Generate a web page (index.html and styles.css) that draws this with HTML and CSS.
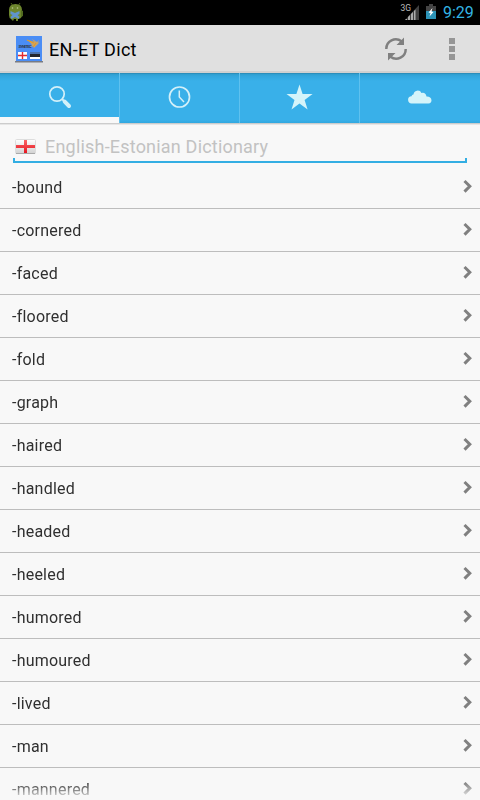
FILE: index.html
```
<!DOCTYPE html>
<html lang="en">
<head>
<meta charset="utf-8">
<title>EN-ET Dict</title>
<link rel="stylesheet" href="styles.css">
</head>
<body>
<svg width="0" height="0" class="defs"><defs>
<symbol id="chevron" viewBox="0 0 10 14"><path d="M1.500 2 6.800 7.300l-5.300 5.300" fill="none" stroke="#808080" stroke-width="3"/></symbol>
</defs></svg>
<div class="status">
  <svg class="droid" width="16" height="20" viewBox="0 0 16 20"><path d="M3 1l2 3M12 1l-2 3" stroke="#496018"/><path d="M1 8Q1 2 7.500 2T14 8v6q-1 3-4 3v2H8v-2H6l-1 2-2-2q-2-1-2-4z" fill="#6d862d"/><path d="M13 8l2 1v5l-2 1z" fill="#526b20"/><path d="M2.500 9l4.500 2 4.500-2v3l-2 1 2 2-1 2-3.500-2-3.500 2-1-2 2-2-2-1z" fill="#5f94cc"/><circle cx="4.500" cy="6" r=".8" fill="#bdc997"/><circle cx="9.500" cy="6" r=".8" fill="#bdc997"/></svg>
  <span class="net">3G</span>
  <svg class="signal" width="14" height="15" viewBox="0 0 14 15"><path d="M0 15 14 0v15z" fill="#404040"/><path d="M1 14h1v1H0zM3 12l2-2v5H3zM6 9l2-2v8H6zM9 6l1.500-1.500V15H9z" fill="#aaa"/></svg>
  <svg class="battery" width="10" height="15" viewBox="0 0 10 15"><path d="M3 0h4v2h3v13H0V2h3z" fill="#444"/><path d="M0 7h10v8H0z" fill="#2c93b7"/><path d="M6.500 4 2.500 8.500l2 .5L3.500 12.500l4-4.500L5.500 7.500z" fill="#fff"/></svg>
  <span class="time">9:29</span>
</div>
<header class="bar">
  <svg class="logo" width="28" height="28" viewBox="0 0 28 28"><path d="M1 1h26v25H1z" fill="#4a8df5"/><path d="M0 26h28v1.500H0z" fill="#777b84"/><path d="M13 5l6 2-2-3 5 3 2-2-1 3 2-1-4 4-2 2-1-2-3 1 2-2z" fill="#c8a468"/><path d="M12 5l7 3M18 12l3-4" stroke="#e79b22" stroke-width="1.200"/><text x="3.500" y="12.500" class="logotext" textLength="13">SYNETEC</text><path d="M3 17h9v7H3zM15 17h10v7H15z" fill="#fff"/><path d="M3 20.500h9M7.500 17v7" stroke="#e22b2f" stroke-width="1.400"/><path d="M15 17h10v2H15z" fill="#4d74b0"/><path d="M15 19h10v3H15z" fill="#222630"/></svg>
  <h1>EN-ET Dict</h1>
  <svg class="sync" width="24" height="24" viewBox="0 0 24 24"><g fill="none" stroke="#808080" stroke-width="2.500"><path d="M2.300 12A9.500 9.500 0 0 1 17.500 4.300"/><path d="M21.700 12A9.500 9.500 0 0 1 6.500 19.700"/></g><path d="M20 .5V8h-7.500zM4 23.500V16h7.500z" fill="#808080"/></svg>
  <span class="more"><i></i><i></i><i></i></span>
</header>
<nav class="tabs">
  <div class="tab active"><svg width="24" height="24" viewBox="0 0 24 24"><circle cx="9" cy="9" r="7.200" fill="none" stroke="#d4f0f9" stroke-width="1.700"/><path d="M14 14l2 2" stroke="#d4f0f9" stroke-width="2"/><path d="M16.700 16.700l4.300 4.300" stroke="#d4f0f9" stroke-width="4" stroke-linecap="round"/></svg></div>
  <div class="tab"><svg width="24" height="24" viewBox="0 0 24 24"><circle cx="11.500" cy="12" r="10" fill="none" stroke="#d4f0f9" stroke-width="1.700"/><path d="M11.300 5.500V12l4.700 5" fill="none" stroke="#d4f0f9" stroke-width="1.500"/></svg></div>
  <div class="tab"><svg width="28" height="28" viewBox="0 0 28 28"><path d="M13.500 1.500 16.600 11h10l-8 6 3 9.500-8.100-6-8 6L8.500 17l-8-6h9.900z" fill="#d4f4fa"/></svg></div>
  <div class="tab"><svg width="24" height="24" viewBox="0 0 24 24"><path d="M4 18.500a3.600 3.600 0 0 1-.5-7.300Q4 9.300 5.500 9.500a4.200 4.200 0 0 1 8-1.500q4-1 5 3.500 4.500-.2 5 3.700a3.300 3.300 0 0 1-3 3.300z" fill="#d4f4fa"/></svg></div>
</nav>
<div class="search">
  <svg class="flag" width="22" height="16" viewBox="0 0 22 16"><defs><linearGradient id="shade" x2="0" y2="1"><stop stop-color="#fff"/><stop offset="1" stop-color="#d2d2d2"/></linearGradient><linearGradient id="red" x2="0" y2="1"><stop stop-color="#fa6767"/><stop offset="1" stop-color="#e51520"/></linearGradient></defs><rect x=".5" y=".5" width="20" height="14" rx="1" fill="url(#shade)" stroke="#ddd"/><path d="M1 14.500h19" stroke="#aaa"/><path d="M9 1h3v5h8v3h-8v5H9V9H1V6h8z" fill="url(#red)"/></svg>
  <span class="hint">English-Estonian Dictionary</span>
</div>
<main class="list">
  <div class="row"><span>-bound</span><svg><use href="#chevron"/></svg></div>
  <div class="row"><span>-cornered</span><svg><use href="#chevron"/></svg></div>
  <div class="row"><span>-faced</span><svg><use href="#chevron"/></svg></div>
  <div class="row"><span>-floored</span><svg><use href="#chevron"/></svg></div>
  <div class="row"><span>-fold</span><svg><use href="#chevron"/></svg></div>
  <div class="row"><span>-graph</span><svg><use href="#chevron"/></svg></div>
  <div class="row"><span>-haired</span><svg><use href="#chevron"/></svg></div>
  <div class="row"><span>-handled</span><svg><use href="#chevron"/></svg></div>
  <div class="row"><span>-headed</span><svg><use href="#chevron"/></svg></div>
  <div class="row"><span>-heeled</span><svg><use href="#chevron"/></svg></div>
  <div class="row"><span>-humored</span><svg><use href="#chevron"/></svg></div>
  <div class="row"><span>-humoured</span><svg><use href="#chevron"/></svg></div>
  <div class="row"><span>-lived</span><svg><use href="#chevron"/></svg></div>
  <div class="row"><span>-man</span><svg><use href="#chevron"/></svg></div>
  <div class="row"><span>-mannered</span><svg><use href="#chevron"/></svg></div>
</main>
</body>
</html>
```
FILE: styles.css
```
* { box-sizing: border-box; }
body {
  margin: 0;
  width: 480px;
  height: 800px;
  overflow: hidden;
  display: flex;
  flex-direction: column;
  background: #f8f8f8;
  color: #303030;
  font-family: Roboto, sans-serif;
}
svg { display: block; flex: none; }
.defs { position: absolute; }
.status {
  height: 25px;
  flex: none;
  display: flex;
  background: #000;
  padding: 0 6px 0 8px;
}
.droid { margin-top: 2px; }
.net { margin: 3px 0 0 auto; color: #bbb; font-size: 8.5px; line-height: 10px; }
.signal { margin: 5px 7px 0 -6px; }
.battery { margin: 4px 7px 0 0; }
.time { color: #33b5e5; font-size: 16px; line-height: 25px; width: 31px; white-space: nowrap; }
.bar {
  height: 48px;
  flex: none;
  display: flex;
  align-items: center;
  padding: 0 25px 0 15px;
  background: #e0e0e0;
  border-bottom: 2px solid #d0d0d0;
}
.logo { margin-top: 2px; }
.logotext { font-family: Roboto, sans-serif; font-size: 4px; font-weight: 700; fill: #303d55; }
h1 { margin: 3px 0 0 6px; font-size: 18px; line-height: 24px; font-weight: 400; letter-spacing: .3px; color: #000; flex: 1; }
.sync { margin: 2px 41px 0 0; }
.more { display: flex; flex-direction: column; gap: 2px; margin-top: 2px; }
.more i { width: 6px; height: 6px; background: #969696; }
.tabs {
  height: 52px;
  flex: none;
  display: grid;
  grid-template-columns: repeat(4, 1fr);
  background: linear-gradient(#277fa9 0, #2f9dce 1px, #33a6dc 3px, #39b0e9 8px, #39b0e9 47px, #31a7df 50px, #ccc 50px, #ccc 51px, #e6e6e6 51px);
}
.tab {
  height: 50px;
  display: flex;
  justify-content: center;
  align-items: center;
  border-right: 1px solid #5fc1ef;
  padding-bottom: 2px;
}
.tab:last-child { border-right: 0; }
.tab.active { box-shadow: inset 0 -6px #f8f8f8; }
.search {
  height: 38px;
  flex: none;
  margin: 0 13px;
  padding: 9px 0 0 2px;
  display: flex;
  align-items: flex-start;
  background:
    linear-gradient(#33aee3, #33aee3) 0 100% / 2px 5px no-repeat,
    linear-gradient(#33aee3, #33aee3) 100% 100% / 2px 5px no-repeat,
    linear-gradient(#33aee3, #33aee3) 0 100% / 100% 2px no-repeat;
}
.flag { margin-top: 5px; }
.hint { margin: 1px 0 0 8px; font-size: 18px; line-height: 24px; letter-spacing: .2px; color: #c2c2c2; }
.list { flex: 1; min-height: 0; overflow: hidden; padding-top: 3px; mask-image: linear-gradient(#000 calc(100% - 18px), transparent 100%); }
.row {
  height: 43px;
  display: flex;
  justify-content: space-between;
  align-items: center;
  padding: 0 7px 0 12px;
  border-bottom: 1px solid #bdbdbd;
  font-size: 16px;
  letter-spacing: .22px;
}
.row svg { width: 10px; height: 14px; margin-top: -2px; }
```
